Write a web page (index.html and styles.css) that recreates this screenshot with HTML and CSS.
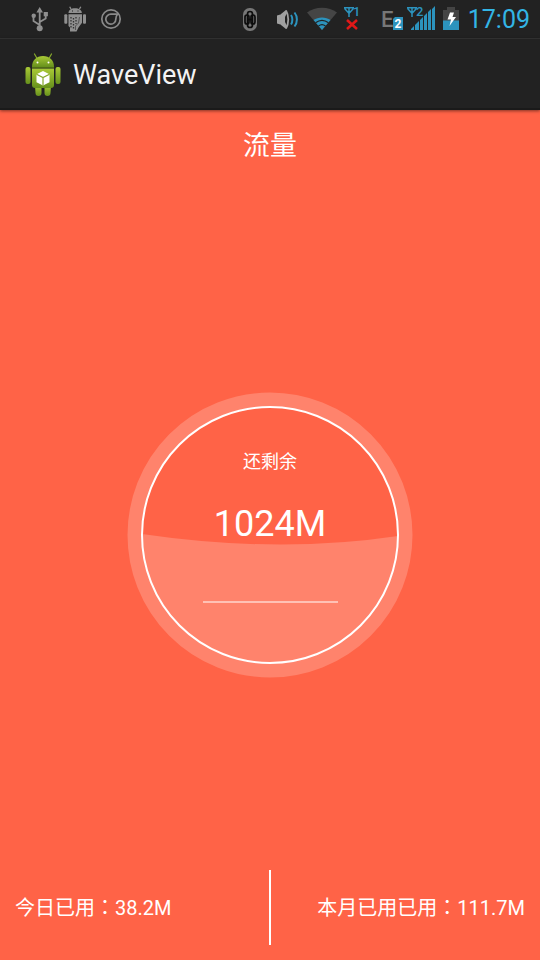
FILE: index.html
```
<!DOCTYPE html>
<html lang="zh-Hant">
<head>
<meta charset="utf-8">
<meta name="viewport" content="width=device-width, initial-scale=1">
<title>WaveView</title>
<link rel="stylesheet" href="styles.css">
</head>

<body>

<!-- status bar -->
<div class="status">
  <div class="icons left">
    <svg width="24" height="38" viewBox="28 0 24 38">
      <g fill="none" stroke="#8f8f8f" stroke-width="1.8">
        <path d="M39.7 11V27M39.7 25L33.500 21V16M39.700 22L45.700 18.500V14"/>
      </g>
      <path fill="#8f8f8f" d="M39.7 7L43 12.500H36.400ZM43.700 12h4.200v4.200h-4.200Z"/>
      <circle cx="33.700" cy="15.800" r="2.200" fill="#8f8f8f"/>
      <circle cx="39.700" cy="28.200" r="3" fill="#8f8f8f"/>
    </svg>
    <svg width="24" height="38" viewBox="64 0 24 38">
      <g fill="#8f8f8f">
        <path d="M68.500 13c0-3 2.600-4.700 6.500-4.700s6.800 1.700 6.800 4.700Z"/>
        <path d="M68.500 14.300h13.500v8.500l-3.500 4.700-2 4h-6.500v-4l-1.500-1.500Z"/>
        <rect x="64.300" y="14.300" width="3" height="9.500" rx="1"/>
        <rect x="83" y="14.300" width="3" height="9.500" rx="1"/>
      </g>
      <path d="M71 9l-1.300-2.300M79.500 9l1.300-2.300" stroke="#8f8f8f" stroke-width="1.300"/>
      <path d="M71 17v11M73.500 18v11M76 17v7" stroke="#333" stroke-width="1.300" stroke-dasharray="1.500 1.500"/>
      <path d="M79.500 17l-1 6-3 3v4" fill="none" stroke="#555"/>
      <path d="M72 11h1M77.500 11h1" stroke="#222"/>
    </svg>
    <svg width="24" height="38" viewBox="100 0 24 38">
      <g fill="none" stroke="#8a8a8a" stroke-width="1.700">
        <circle cx="111" cy="19" r="9.200"/>
        <path d="M117.500 14.200h-6.500a5 5 0 1 0 4.800 5c0-2 .4-3.500 1.700-5Z"/>
      </g>
    </svg>
  </div>

  <div class="icons right">
    <svg width="30" height="38" viewBox="240 0 30 38">
      <rect x="243" y="8" width="14" height="23" rx="6.500" fill="#777"/>
      <g fill="none" stroke="#0c0c0c" stroke-width="1.700">
        <rect x="247.500" y="11.500" width="5" height="16" rx="2.500"/>
        <rect x="245" y="15" width="4" height="9" rx="2"/>
        <rect x="251" y="15" width="4" height="9" rx="2"/>
        <path d="M247.500 19.500h5"/>
      </g>
    </svg>
    <svg width="34" height="38" viewBox="270 0 34 38">
      <path fill="#a0a0a0" d="M277 15.500l5-1.500v11l-5-1.500Z"/>
      <path fill="#a0a0a0" d="M281 14l5-4 1 3-2 4v5l2 4-1 3-5-4Z"/>
      <path fill="none" stroke="#a0a0a0" stroke-width="1.800" d="M286 10.500c3 5 3 13 0 18"/>
      <path fill="none" stroke="#2c93bd" stroke-width="2" d="M291 15c1.800 2.500 1.800 7 0 9.500M294.500 12.500c3.200 4 3.200 10 0 14"/>
    </svg>
    <svg width="36" height="38" viewBox="304 0 36 38">
      <path fill="#454545" d="M322 30L307 12.500c8-6.500 22-6.500 30 0Z"/>
      <path fill="#2c93bd" d="M322 30l-8.500-10c4.500-3.500 12.500-3.500 17 0Z"/>
      <path fill="none" stroke="#222" stroke-width="1.200" d="M315.500 22.700c4-3 9-3 13 0M318.500 26c2-1.600 5-1.600 7 0"/>
    </svg>
    <svg width="36" height="38" viewBox="340 0 36 38">
      <path fill="none" stroke="#2c93bd" stroke-width="1.500" d="M344 7.700h10M345 8v1l3.700 4h.6l3.700-4V8M349 8v9"/>
      <text class="sim" x="353" y="16">1</text>
      <path stroke="#e01818" stroke-width="2.600" d="M347 20l10 9M357 20l-10 9"/>
    </svg>
    <svg width="29" height="38" viewBox="376 0 29 38">
      <text class="edge" x="381" y="27">E</text>
      <path fill="#2c93bd" d="M395 17h8v13h-10V19Z"/>
      <text class="badge" x="398" y="28" text-anchor="middle">2</text>
    </svg>
    <svg width="35" height="38" viewBox="405 0 35 38">
      <path fill="none" stroke="#2c93bd" stroke-width="1.500" d="M407 7.700h10M408 8v1l3.700 4h.6l3.700-4V8M412 8v9"/>
      <text class="sim" x="416" y="16">2</text>
      <path fill="#2c93bd" d="M411 30v-1l3-3v4ZM415 30v-5l4-4v9ZM420 30v-10l3-3v13ZM424 30v-14l3-3v17ZM428 30v-18l3-3v21ZM432 30v-21l3-3v24Z"/>
    </svg>
    <svg width="28" height="38" viewBox="440 0 28 38">
      <path fill="#444" d="M447 7h8v3h4v11h-16V10h4Z"/>
      <path fill="#2c93bd" d="M443 20.500h16V30h-16Z"/>
      <path fill="#fff" d="M450 12.500h4l-1.500 4.500h3.500l-6.500 9 1.500-6.500h-3.500Z"/>
    </svg>
    <span class="time">17:09</span>
  </div>
</div>

<!-- action bar -->
<header class="bar">
  <svg class="logo" width="38" height="44" viewBox="0 0 38 44">
    <defs>
      <linearGradient id="green" x1="0" y1="0" x2="0" y2="1">
        <stop offset="0" stop-color="#a9c936"/>
        <stop offset="1" stop-color="#66901c"/>
      </linearGradient>
    </defs>
    <path d="M12.500 4.500L10.500 1M25.500 4.500L27.500 1" stroke="#88ab2c" stroke-width="1.200" stroke-linecap="round"/>
    <g fill="url(#green)">
      <path d="M8 14C8 7 12.500 3 19 3s11 4 11 11Z"/>
      <path d="M11 32h6.500v8a3 3 0 0 1-6 0ZM20.500 32h6.500l-.5 8a3 3 0 0 1-6 0Z"/>
      <path d="M8 15.500h22V32a3 3 0 0 1-3 3H11a3 3 0 0 1-3-3Z"/>
      <rect x="1.500" y="14" width="5" height="17" rx="2"/>
      <rect x="31.500" y="14" width="5" height="17" rx="2"/>
    </g>
    <path d="M8 14.700h22" stroke="#5a7d16"/>
    <circle cx="13.500" cy="9.500" r="1" fill="#fff"/>
    <circle cx="24.500" cy="9.500" r="1" fill="#fff"/>
    <path fill="#fff" d="M19 18l6.500 3.200v8L19 32.500l-6.500-3.300v-8Z"/>
    <path fill="none" stroke="#86a92a" stroke-width="1.200" d="M12.500 21.200L19 24.500l6.500-3.300M19 24.500v8"/>
  </svg>
  <h1>WaveView</h1>
</header>

<main>
  <h2>流量</h2>

  <div class="dial">
    <svg class="wave" viewBox="0 0 286 286">
      <circle cx="143" cy="143" r="135.500" fill="none" stroke="#ff836c" stroke-width="14"/>
      <path d="M15 142Q151 162 271 144A128 128 0 0 1 15 142Z" fill="#ff836c"/>
      <circle cx="143" cy="143" r="128" fill="none" stroke="#fff" stroke-width="2"/>
    </svg>
    <div class="info">
      <span class="label">还剩余</span>
      <span class="left-data">1024M</span>
      <span class="line"></span>
    </div>
  </div>

  <div class="used">
    <p>今日已用：38.2M</p>
    <div class="split"></div>
    <p class="month">本月已用已用：111.7M</p>
  </div>
</main>

</body>
</html>
```
FILE: styles.css
```
* {box-sizing:border-box; margin:0; padding:0;}
body {min-height:100vh; display:flex; flex-direction:column; background:#ff6347; color:#fff; font-family:Roboto,"Noto Sans CJK TC",sans-serif;}
svg {display:block;}

.status {display:flex; justify-content:space-between; height:38px; background:#222; padding:0 10px 0 28px;}
.icons {display:flex; align-items:center;}
.left {gap:12px;}
.time {padding-top:2px; font-size:25px; line-height:36px; color:#33b5e5;}
.sim {font-size:13px; font-weight:500; fill:#2c93bd;}
.edge {font-size:22px; font-weight:500; fill:#777;}
.badge {font-size:12px; font-weight:bold; fill:#fff;}

.bar {display:flex; align-items:center; gap:11px; height:72px; padding:2px 24px 0; background:#222; border-top:1px solid #303030; border-bottom:2px solid #1a1a1a; box-shadow:0 1px 3px rgba(0,0,0,.5);}
.bar h1 {font-size:27px; line-height:32px; font-weight:normal; color:#f3f3f3;}

main {flex:1; display:grid; grid-template-rows:1fr auto 1fr;}
h2 {padding-top:16px; font-size:27px; line-height:40px; font-weight:normal; text-align:center;}

.dial {display:grid; width:286px; justify-self:center;}
.wave, .info {grid-area:1/1;}
.info {display:flex; flex-direction:column; align-items:center; padding-top:58px;}
.label {font-size:18px; line-height:24px;}
.left-data {margin-top:28px; font-size:36px; line-height:44px;}
.line {width:135px; height:2px; margin-top:55px; background:#ffc1b5;}

.used {align-self:end; display:flex; align-items:center; padding:0 15px 15px;}
.used p {flex:1; font-size:20px; line-height:28px; white-space:nowrap;}
.used .month {text-align:right;}
.split {width:2px; height:75px; background:#fff;}
```
